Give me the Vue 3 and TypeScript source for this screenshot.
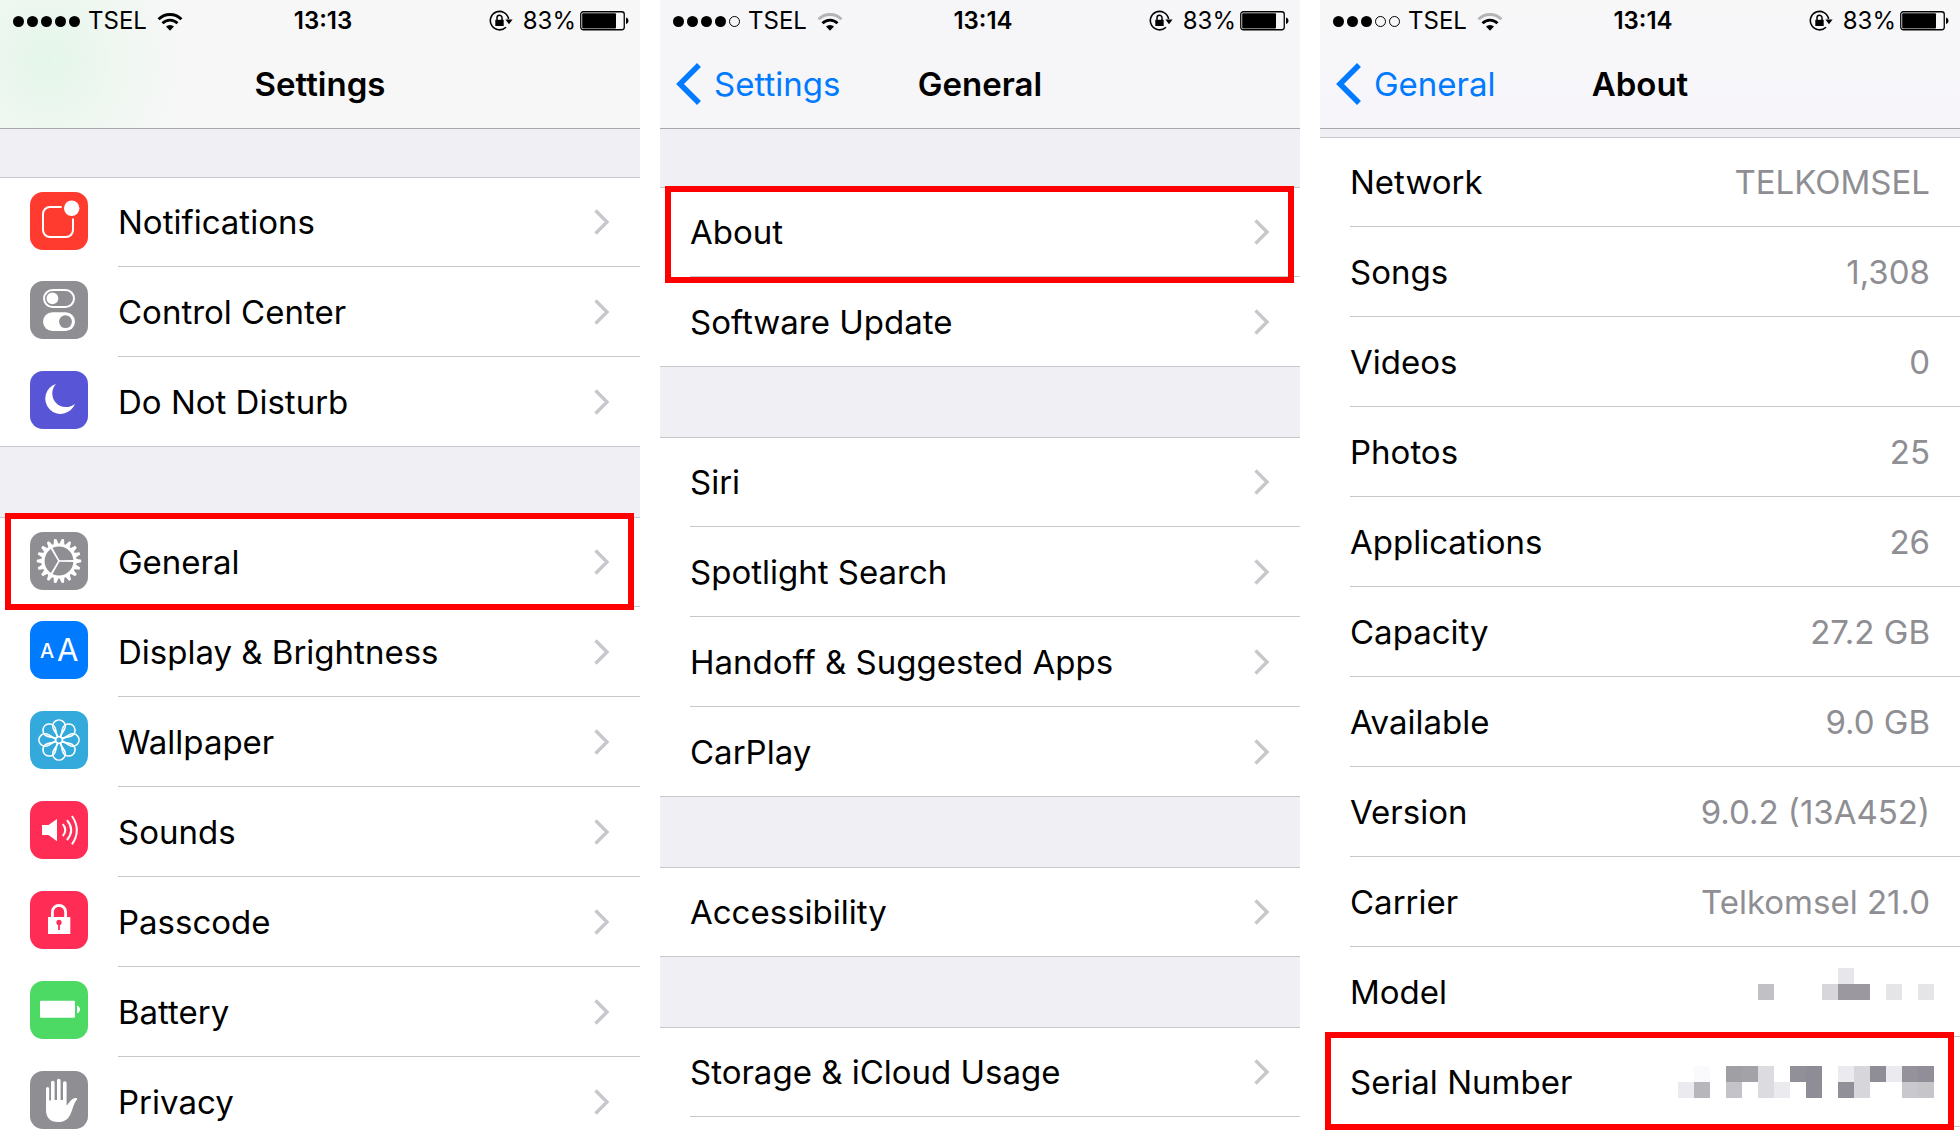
<script setup lang="ts">
interface Row {
  label: string
  icon?: string
  color?: string
  value?: string
  mosaic?: string[][]
  marked?: boolean
}

interface Group {
  rows: Row[]
  open?: boolean
}

interface Screen {
  id: string
  title: string
  back?: string
  time: string
  signal: number
  weakWifi: boolean
  groups: Group[]
}

const modelMosaic: string[][] = [
  ['', '', '', '', '', '', '', '', '', '', '#e7e6ea', '', '', '', '', ''],
  ['', '', '', '', '', '#c1c0c5', '', '', '', '#d7d6da', '#9b98a0', '#9b98a0', '', '#e5e5e7', '', '#e5e5e7'],
  ['', '', '', '', '', '', '', '', '', '', '', '', '', '', '', ''],
]

const serialMosaic: string[][] = [
  ['', '#fafafc', '', '#a09fa3', '#a3a2a7', '#dcdce0', '', '#918f97', '#8e8c95', '', '#ebebef', '#d7d6da', '#8f8d96', '#ebebef', '#95929b', '#918e97'],
  ['#ebebef', '#b7b6bb', '', '#c4c3c9', '', '#dcdce0', '#ebebef', '', '#8f8d96', '', '#918f97', '#d7d6da', '', '', '#c9c8ce', '#c6c5ca'],
]

const screens: Screen[] = [
  {
    id: 'settings',
    title: 'Settings',
    time: '13:13',
    signal: 5,
    weakWifi: false,
    groups: [
      {
        rows: [
          { label: 'Notifications', icon: 'notifications', color: '#ff3b30' },
          { label: 'Control Center', icon: 'control', color: '#8e8e93' },
          { label: 'Do Not Disturb', icon: 'moon', color: '#5856d6' },
        ],
      },
      {
        open: true,
        rows: [
          { label: 'General', icon: 'gear', color: '#8e8e93', marked: true },
          { label: 'Display & Brightness', icon: 'display', color: '#007aff' },
          { label: 'Wallpaper', icon: 'wallpaper', color: '#34aadc' },
          { label: 'Sounds', icon: 'sounds', color: '#ff2d55' },
          { label: 'Passcode', icon: 'passcode', color: '#ff2d55' },
          { label: 'Battery', icon: 'battery', color: '#4cd964' },
          { label: 'Privacy', icon: 'privacy', color: '#8e8e93' },
        ],
      },
    ],
  },
  {
    id: 'general',
    title: 'General',
    back: 'Settings',
    time: '13:14',
    signal: 4,
    weakWifi: true,
    groups: [
      { rows: [{ label: 'About', marked: true }, { label: 'Software Update' }] },
      {
        rows: [
          { label: 'Siri' },
          { label: 'Spotlight Search' },
          { label: 'Handoff & Suggested Apps' },
          { label: 'CarPlay' },
        ],
      },
      { rows: [{ label: 'Accessibility' }] },
      { open: true, rows: [{ label: 'Storage & iCloud Usage' }] },
    ],
  },
  {
    id: 'about',
    title: 'About',
    back: 'General',
    time: '13:14',
    signal: 3,
    weakWifi: true,
    groups: [
      {
        open: true,
        rows: [
          { label: 'Network', value: 'TELKOMSEL' },
          { label: 'Songs', value: '1,308' },
          { label: 'Videos', value: '0' },
          { label: 'Photos', value: '25' },
          { label: 'Applications', value: '26' },
          { label: 'Capacity', value: '27.2 GB' },
          { label: 'Available', value: '9.0 GB' },
          { label: 'Version', value: '9.0.2 (13A452)' },
          { label: 'Carrier', value: 'Telkomsel 21.0' },
          { label: 'Model', mosaic: modelMosaic },
          { label: 'Serial Number', mosaic: serialMosaic, marked: true },
        ],
      },
    ],
  },
]

const teeth: number[] = Array.from({ length: 18 }, (_, i) => i * 20)
const petals: number[] = Array.from({ length: 8 }, (_, i) => i * 45)
</script>

<template>
  <main class="board">
    <section v-for="screen in screens" :key="screen.id" class="screen" :class="`screen-${screen.id}`">
      <header class="bar">
        <div class="status">
          <div class="status-left">
            <span class="dots">
              <i v-for="n in 5" :key="n" class="dot" :class="{ hollow: n > screen.signal }"></i>
            </span>
            <span>TSEL</span>
            <svg class="wifi" viewBox="0 0 26 19" width="26" height="19" aria-hidden="true">
              <path d="M1.6 7.2A16.2 16.2 0 0 1 24.4 7.2" fill="none" stroke-width="3" :stroke="screen.weakWifi ? '#b4b4b6' : '#000'" />
              <path d="M5.5 11.2A10.6 10.6 0 0 1 20.5 11.2" fill="none" stroke="#000" stroke-width="2.8" />
              <path d="M13 18.8 9 14.6A5.8 5.8 0 0 1 17 14.6z" />
            </svg>
          </div>
          <time class="clock">{{ screen.time }}</time>
          <div class="status-right">
            <svg class="lock" viewBox="0 0 24 22" width="24" height="22" aria-hidden="true">
              <path d="M19.6 9A9.2 9.2 0 1 0 17 17.2" fill="none" stroke="#000" stroke-width="1.6" />
              <path d="M16.4 9.5h7.2l-3.600 4.800z" />
              <path d="M6.300 9.800h8.400v6.200H6.300z" />
              <path d="M8 10V7.800a2.500 2.500 0 0 1 5 0V10" fill="none" stroke="#000" stroke-width="1.500" />
            </svg>
            <span>83%</span>
            <svg class="cell" viewBox="0 0 49 20" width="49" height="20" aria-hidden="true">
              <rect x=".75" y=".75" width="43.500" height="18" rx="2.500" fill="none" stroke="#000" stroke-width="1.300" />
              <rect x="2.200" y="2.200" width="33.800" height="15.200" rx="1" />
              <path d="M46 6.500c1.600.4 2.500 1.700 2.500 3.300s-.9 2.900-2.500 3.300z" />
            </svg>
          </div>
        </div>
        <nav class="nav">
          <button v-if="screen.back" class="back" type="button">
            <svg viewBox="0 0 26 42" width="26" height="42" aria-hidden="true">
              <path d="M23 2 4 21 23 40" fill="none" stroke="#007aff" stroke-width="5.500" />
            </svg>
            <span>{{ screen.back }}</span>
          </button>
          <h1 class="title">{{ screen.title }}</h1>
        </nav>
      </header>

      <div class="content">
        <ul v-for="(group, g) in screen.groups" :key="g" class="group" :class="{ open: group.open }">
          <li v-for="row in group.rows" :key="row.label" class="item">
            <component :is="row.value || row.mosaic ? 'div' : 'a'" class="row" :href="row.value || row.mosaic ? undefined : '#'">
              <svg v-if="row.icon" class="icon" viewBox="0 0 58 58" width="58" height="58" aria-hidden="true">
                <rect width="58" height="58" rx="13" :fill="row.color" />
                <g v-if="row.icon === 'notifications'">
                  <path d="M31.700 15H20a7 7 0 0 0-7 7v16a7 7 0 0 0 7 7h16a7 7 0 0 0 7-7V26.500" fill="none" stroke="#fff" stroke-width="2" />
                  <circle cx="41.700" cy="16.300" r="7.700" fill="#fff" />
                </g>
                <g v-else-if="row.icon === 'control'">
                  <rect x="14" y="9" width="30" height="17" rx="8.500" fill="none" stroke="#fff" stroke-width="2" />
                  <circle cx="22.400" cy="17.400" r="5.900" fill="#fff" />
                  <rect x="13" y="31.300" width="32" height="18.700" rx="9.350" fill="#fff" />
                  <circle cx="35.500" cy="40.600" r="6.400" :fill="row.color" />
                </g>
                <path v-else-if="row.icon === 'moon'" d="M26 13A15.300 15.300 0 1 0 45 32.700 13.700 13.700 0 0 1 26 13z" fill="#fff" />
                <g v-else-if="row.icon === 'gear'" fill="#fff">
                  <circle cx="29" cy="29" r="16" fill="none" stroke="#fff" stroke-width="3.200" />
                  <path v-for="t in teeth" :key="t" :transform="`rotate(${t} 29 29)`" d="M45.500 26.400 51.200 27.800v2.400L45.500 31.600z" />
                  <path v-for="s in [0, 120, 240]" :key="`s${s}`" :transform="`rotate(${s} 29 29)`" d="M28.600 28.200 45 28v2L28.600 29.800z" />
                </g>
                <g v-else-if="row.icon === 'display'" fill="#fff">
                  <text class="glyph-small" x="10" y="37">A</text>
                  <text class="glyph-large" x="27" y="40">A</text>
                </g>
                <g v-else-if="row.icon === 'wallpaper'" fill="none" stroke="#fff" stroke-width="1.600">
                  <circle cx="29" cy="29" r="3.300" />
                  <path
                    v-for="p in petals"
                    :key="p"
                    :transform="`rotate(${p} 29 29)`"
                    d="M28 25.600 23.600 18.500A6.300 6.300 0 1 1 34.400 18.500L30 25.600"
                  />
                </g>
                <g v-else-if="row.icon === 'sounds'">
                  <path d="M12 24h6.500L27 18v22.300L18.500 34H12z" fill="#fff" />
                  <path d="M32.800 23.200q5 5.900 0 11.800M37 19.200q8.400 9.900 0 19.800M42 15q9.600 14.200 0 28.400" fill="none" stroke="#fff" stroke-width="2" />
                </g>
                <g v-else-if="row.icon === 'passcode'">
                  <path d="M22.400 27v-6a6.600 6.600 0 0 1 13.200 0v6" fill="none" stroke="#fff" stroke-width="2.800" />
                  <rect x="18" y="26" width="22.300" height="17" fill="#fff" />
                  <circle cx="29" cy="31.400" r="2.600" :fill="row.color" />
                  <rect x="28.100" y="32" width="1.800" height="7" :fill="row.color" />
                </g>
                <g v-else-if="row.icon === 'battery'" fill="#fff">
                  <rect x="10" y="19.800" width="35" height="17" rx="1" />
                  <path d="M47 24.700c2 .6 3 2 3 3.800s-1 3.200-3 3.800z" />
                </g>
                <path
                  v-else-if="row.icon === 'privacy'"
                  d="M16 39V17.600a1.600 1.600 0 0 1 3.200 0V29.500H21V11.500a1.800 1.800 0 0 1 3.600 0V29H27V9.500a1.800 1.800 0 0 1 3.600 0V29H33V12a1.800 1.800 0 0 1 3.600 0V34.500C39.600 32 40.500 27.400 46 27c1.500 0 1.500 1.200.7 2-3.400 3.500-4.200 11-7.200 16C37 49.200 33.500 51 28 51 20 51 16 46.500 16 39z"
                  fill="#fff"
                />
              </svg>
              <span class="body">
                <span class="label">{{ row.label }}</span>
                <span v-if="row.value" class="value">{{ row.value }}</span>
                <span v-else-if="row.mosaic" class="mosaic" role="img" aria-label="Hidden">
                  <span v-for="(line, y) in row.mosaic" :key="y" class="mosaic-line">
                    <i v-for="(shade, x) in line" :key="x" class="tile" :style="{ background: shade || 'transparent' }"></i>
                  </span>
                </span>
                <svg v-else class="chevron" viewBox="0 0 16 26" width="16" height="26" aria-hidden="true">
                  <path d="M1.500 1.500 13 13 1.500 24.500" fill="none" stroke="#c7c7cc" stroke-width="3.400" />
                </svg>
              </span>
            </component>
            <span v-if="row.marked" class="marker"></span>
          </li>
        </ul>
      </div>
    </section>
  </main>
</template>

<style>
body {
  margin: 0;
  background: #fff;
}
</style>

<style scoped>
.board {
  display: grid;
  grid-template-columns: repeat(3, minmax(0, 1fr));
  gap: 20px;
  height: 100vh;
  overflow: hidden;
  font-family: Inter, Roboto, 'Liberation Sans', sans-serif;
  color: #000;
}

.screen {
  display: flex;
  flex-direction: column;
  min-height: 0;
  overflow: hidden;
  background: #efeff4;
}

.bar {
  flex: none;
  border-bottom: 1px solid #a7a7ac;
  background: #f6f6f8;
}

.screen-settings .bar {
  background: radial-gradient(ellipse 140px 150px at 48px 60px, #e4f6ea, #f0f7f1 55%, rgba(247, 247, 248, 0)), #f7f7f8;
}

.screen-about .bar {
  background: linear-gradient(#f7f7f8, #f7f5fa);
}

.status {
  display: grid;
  grid-template-columns: 1fr auto 1fr;
  align-items: center;
  box-sizing: border-box;
  height: 40px;
  padding: 2px 11px 0 13px;
  font-size: 24px;
  line-height: 38px;
}

.status-left,
.status-right {
  display: flex;
  align-items: center;
}

.status-right {
  justify-content: flex-end;
}

.dots {
  display: flex;
  gap: 3px;
  margin-right: 8px;
}

.dot {
  box-sizing: border-box;
  width: 11px;
  height: 11px;
  border-radius: 50%;
  background: #000;
}

.dot.hollow {
  border: 1px solid #000;
  background: transparent;
}

.wifi {
  margin-left: 10px;
}

.clock {
  padding-left: 4px;
  font-weight: 600;
}

.lock {
  margin-right: 10px;
}

.cell {
  margin-left: 4px;
}

.nav {
  position: relative;
  display: flex;
  align-items: center;
  justify-content: center;
  height: 88px;
}

.back {
  position: absolute;
  left: 16px;
  top: 0;
  display: flex;
  align-items: center;
  gap: 12px;
  height: 88px;
  padding: 0;
  border: 0;
  background: none;
  color: #007aff;
  font: inherit;
  font-size: 33px;
  cursor: pointer;
}

.title {
  margin: 0;
  font-size: 33px;
  font-weight: 600;
}

.content {
  display: flex;
  flex: 1;
  flex-direction: column;
  gap: 70px;
  min-height: 0;
  padding-top: 58px;
}

.screen-settings .content {
  padding-top: 48px;
}

.screen-about .content {
  padding-top: 8px;
}

.group {
  flex: none;
  margin: 0;
  padding: 0;
  border-top: 1px solid #c8c7cc;
  background: #fff;
  list-style: none;
}

.group.open {
  flex: 1 0 auto;
}

.item {
  position: relative;
  height: 90px;
}

.item:first-child {
  height: 89px;
}

.row {
  display: flex;
  align-items: center;
  box-sizing: border-box;
  height: 100%;
  padding-left: 30px;
  color: inherit;
  text-decoration: none;
}

.icon {
  flex: none;
  margin: 0 30px 4px 0;
}

.body {
  display: flex;
  flex: 1;
  align-items: center;
  justify-content: space-between;
  box-sizing: border-box;
  height: 100%;
  padding-right: 30px;
  border-bottom: 1px solid #c8c7cc;
  font-size: 33px;
  white-space: nowrap;
}

.group:not(.open) .item:last-child .row {
  border-bottom: 1px solid #c8c7cc;
}

.group:not(.open) .item:last-child .body {
  border-bottom: 0;
}

.value {
  color: #8e8e93;
}

.mosaic {
  margin-right: -4px;
}

.mosaic-line {
  display: flex;
}

.tile {
  width: 16px;
  height: 16px;
}

.marker {
  position: absolute;
  z-index: 1;
  inset: -5px 6px -3px 5px;
  border: 6px solid #f00;
  pointer-events: none;
}

.screen-general .marker {
  top: -2px;
  bottom: -6px;
}

.glyph-small {
  font-size: 20px;
  font-weight: 500;
}

.glyph-large {
  font-size: 31px;
}
</style>
